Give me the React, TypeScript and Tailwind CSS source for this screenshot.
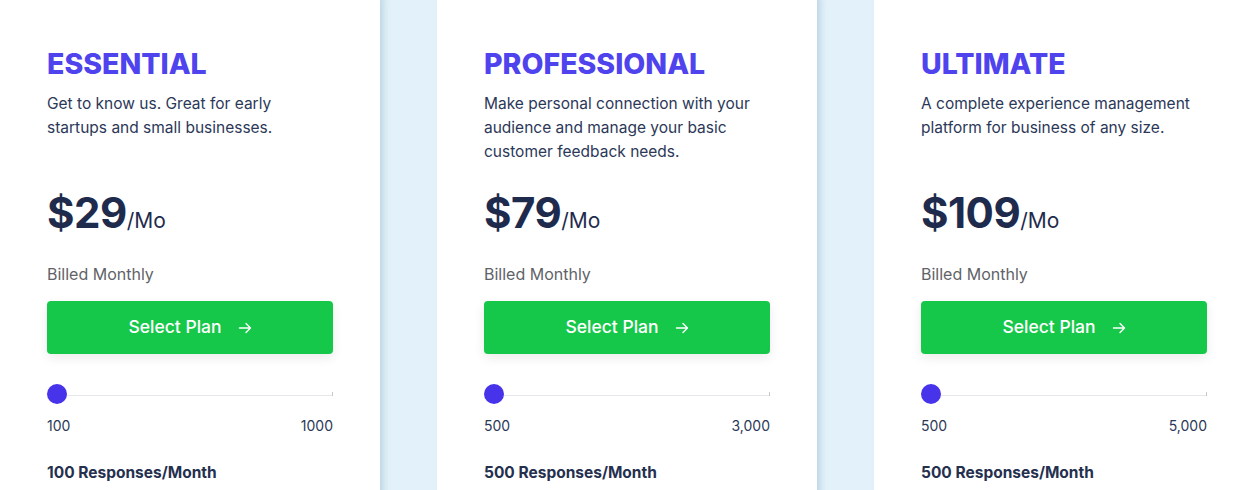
import React from "react";

const plans = [
  {
    name: "ESSENTIAL",
    desc: ["Get to know us. Great for early", "startups and small businesses."],
    price: "$29",
    min: "100",
    max: "1000",
    resp: "100 Responses/Month",
  },
  {
    name: "PROFESSIONAL",
    desc: ["Make personal connection with your", "audience and manage your basic", "customer feedback needs."],
    price: "$79",
    min: "500",
    max: "3,000",
    resp: "500 Responses/Month",
  },
  {
    name: "ULTIMATE",
    desc: ["A complete experience management", "platform for business of any size."],
    price: "$109",
    min: "500",
    max: "5,000",
    resp: "500 Responses/Month",
  },
];

export default function App() {
  return (
    <div
      className="w-[1253px] h-[490px] overflow-hidden bg-[#e3f2fa] flex gap-[57px]"
      style={{ fontFamily: "Inter, 'Noto Sans', sans-serif" }}
    >
      {plans.map((p, idx) => (
        <div
          key={idx}
          className="w-[380px] shrink-0 bg-white rounded-[6px] mt-[-6px] h-[510px] shadow-[4px_0_6px_rgba(150,185,205,0.45)] pl-[47px] pr-[46px] pt-[54px]"
        >
          <h2 className="text-[28.5px] leading-[32px] font-extrabold text-[#4f43ee]">{p.name}</h2>
          <p className="mt-[12px] text-[15.5px] leading-[24px] text-[#2c3858]">
            {p.desc.map((l, i) => (
              <span key={i} className="block">{l}</span>
            ))}
          </p>
          <div
            className={
              p.desc.length === 3
                ? "mt-[21px] flex items-baseline text-[#1f2b4d]"
                : "mt-[45px] flex items-baseline text-[#1f2b4d]"
            }
          >
            <span className="text-[42px] leading-[56px] font-bold tracking-[-0.5px]">{p.price}</span>
            <span className="text-[21px] leading-[24px] font-normal">/Mo</span>
          </div>
          <div className="mt-[23px] text-[16px] leading-[20px] text-[#5f6368]">Billed Monthly</div>
          <button className="mt-[17px] w-[286px] h-[53px] rounded-[4px] bg-[#16c84a] text-white text-[17.5px] font-medium flex items-center justify-center gap-[16px] shadow-[0_4px_12px_rgba(0,0,0,0.08)]">
            <span>Select Plan</span>
            <svg width="14" height="14" viewBox="0 0 14 14" fill="none" stroke="white" strokeWidth="1.4" strokeLinecap="round" strokeLinejoin="round">
              <path d="M1.5 7h11M8 2.5 12.5 7 8 11.5" />
            </svg>
          </button>
          <div className="relative mt-[30px] w-[286px] h-[20px] flex items-center">
            <div className="absolute left-[10px] right-0 top-[11px] h-[1px] bg-[#e6e7ea]" />
            <div className="absolute right-0 top-[8px] w-[2px] h-[4px] border-r border-[#c8c8c8]" />
            <div className="relative w-[20px] h-[20px] rounded-full bg-[#4733ea]" />
          </div>
          <div className="mt-[12px] w-[286px] flex justify-between text-[14px] leading-[20px] text-[#2c3858]">
            <span>{p.min}</span>
            <span>{p.max}</span>
          </div>
          <div className="mt-[27px] text-[15.5px] leading-[20px] font-bold text-[#25304f]">{p.resp}</div>
        </div>
      ))}
    </div>
  );
}
